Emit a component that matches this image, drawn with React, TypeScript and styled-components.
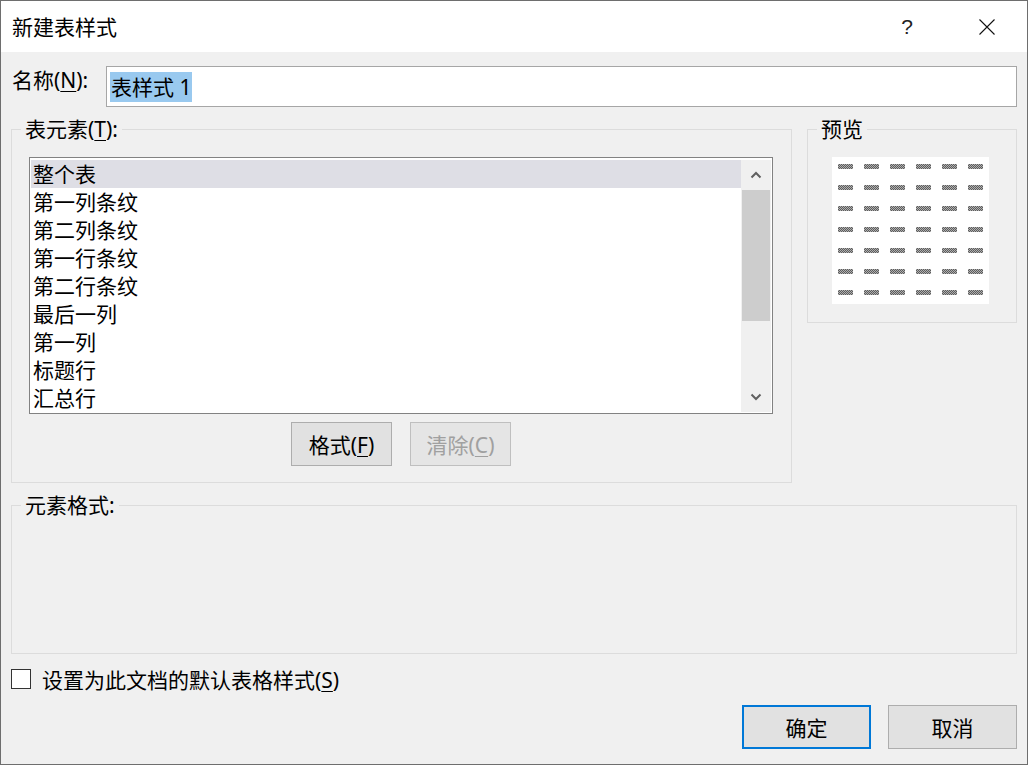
import styled, { createGlobalStyle } from 'styled-components'

const GlobalStyle = createGlobalStyle`
  html, body {
    margin: 0;
    padding: 0;
    background: #f0f0f0;
  }
  body {
    font-family: "Noto Sans", "Noto Sans CJK SC", sans-serif;
    color: #000;
  }
  u {
    text-underline-offset: 3px;
    text-decoration-thickness: 1px;
  }
`

const ELEMENTS = ['整个表', '第一列条纹', '第二列条纹', '第一行条纹', '第二行条纹', '最后一列', '第一列', '标题行', '汇总行']

const Chevron = ({ up }: { up?: boolean }) => (
  <svg width="12" height="8" viewBox="0 0 12 8">
    <path d={up ? 'M1.5 6.5 L6 2 L10.5 6.5' : 'M1.5 1.5 L6 6 L10.5 1.5'} fill="none" stroke="#606060" strokeWidth="2" />
  </svg>
)

const App = () => {
  const dashes = Array.from({ length: 42 })
  return <Window>
    <GlobalStyle />
    <TitleBar>
      <Title>新建表样式</Title>
      <CaptionButton><Help>?</Help></CaptionButton>
      <CaptionButton>
        <svg width="16" height="16" viewBox="0 0 16 16">
          <path d="M0.5 0.5 L15.5 15.5 M15.5 0.5 L0.5 15.5" stroke="#111" strokeWidth="1.1" />
        </svg>
      </CaptionButton>
    </TitleBar>
    <Body>
      <NameRow>
        <NameLabel>名称(<u>N</u>):</NameLabel>
        <NameInput><Selection>表样式 1</Selection></NameInput>
      </NameRow>

      <MainRow>
        <Group $width={781}>
          <Legend>表元素(<u>T</u>):</Legend>
          <ElementsInner>
            <ListBox>
              <Items>
                {ELEMENTS.map((name, i) => <Item key={name} $selected={i === 0}>{name}</Item>)}
              </Items>
              <ScrollBar>
                <ScrollArrow><Chevron up /></ScrollArrow>
                <Thumb />
                <Track />
                <ScrollArrow><Chevron /></ScrollArrow>
              </ScrollBar>
            </ListBox>
            <ButtonRow>
              <Button>格式(<u>F</u>)</Button>
              <Button disabled>清除(<u>C</u>)</Button>
            </ButtonRow>
          </ElementsInner>
        </Group>

        <Group $grow>
          <Legend>预览</Legend>
          <PreviewInner>
            <PreviewSheet>
              {dashes.map((_, i) => <Dash key={i} />)}
            </PreviewSheet>
          </PreviewInner>
        </Group>
      </MainRow>

      <FormatGroup>
        <Legend>元素格式:</Legend>
        <FormatInner />
      </FormatGroup>

      <CheckRow>
        <CheckBox />
        <CheckLabel>设置为此文档的默认表格样式(<u>S</u>)</CheckLabel>
      </CheckRow>

      <FooterRow>
        <DialogButton $default>确定</DialogButton>
        <DialogButton>取消</DialogButton>
      </FooterRow>
    </Body>
  </Window>
}

const Window = styled.div`
  width: 1028px;
  height: 765px;
  box-sizing: border-box;
  border: 1px solid #6e6e6e;
  background: #f0f0f0;
  display: flex;
  flex-direction: column;
  overflow: hidden;
`
const TitleBar = styled.div`
  height: 51px;
  flex-shrink: 0;
  background: #fff;
  display: flex;
  align-items: center;
  padding-left: 11px;
`
const Title = styled.div`
  flex: 1;
  font-size: 21px;
  line-height: 28px;
`
const CaptionButton = styled.div`
  width: 80px;
  height: 51px;
  display: flex;
  align-items: center;
  justify-content: center;
`
const Help = styled.span`
  font-family: "Liberation Sans", sans-serif;
  font-size: 21px;
  color: #222;
`
const Body = styled.div`
  padding: 14px 10px 14px 10px;
  display: flex;
  flex-direction: column;
`
const NameRow = styled.div`
  display: flex;
  align-items: flex-start;
  height: 41px;
`
const NameLabel = styled.div`
  width: 94px;
  padding-left: 1px;
  font-size: 21px;
  line-height: 28px;
`
const NameInput = styled.div`
  flex: 1;
  height: 41px;
  box-sizing: border-box;
  border: 1px solid #a6a6a6;
  background: #fff;
  display: flex;
  align-items: center;
  padding: 0 3px;
`
const Selection = styled.span`
  background: #99c9ef;
  font-size: 21px;
  line-height: 30px;
  padding: 0 1px;
`
const MainRow = styled.div`
  display: flex;
  align-items: flex-start;
  gap: 15px;
  margin-top: 12px;
`
const Group = styled.fieldset<{ $width?: number; $grow?: boolean }>`
  margin: 0;
  padding: 0;
  min-width: 0;
  border: 1px solid #dcdcdc;
  box-sizing: border-box;
  ${p => p.$width ? `width: ${p.$width}px; flex-shrink: 0;` : ''}
  ${p => p.$grow ? 'flex: 1;' : ''}
`
const Legend = styled.legend`
  margin-left: 9px;
  padding: 0 4px;
  font-size: 21px;
  line-height: 21px;
`
const ElementsInner = styled.div`
  padding: 17px 18px 16px 17px;
`
const ListBox = styled.div`
  display: flex;
  width: 744px;
  box-sizing: border-box;
  border: 1px solid #828282;
  padding: 2px 1px 1px 1px;
  background: #fff;
`
const Items = styled.div`
  flex: 1;
  display: flex;
  flex-direction: column;
`
const Item = styled.div<{ $selected?: boolean }>`
  height: 28px;
  line-height: 28px;
  padding-left: 2px;
  font-size: 21px;
  background: ${p => p.$selected ? '#dedee5' : 'transparent'};
`
const ScrollBar = styled.div`
  width: 30px;
  background: #f0f0f0;
  display: flex;
  flex-direction: column;
`
const ScrollArrow = styled.div`
  height: 30px;
  display: flex;
  align-items: center;
  justify-content: center;
`
const Thumb = styled.div`
  height: 131px;
  margin: 0 1px;
  background: #cdcdcd;
`
const Track = styled.div`
  flex: 1;
`
const ButtonRow = styled.div`
  display: flex;
  justify-content: center;
  gap: 18px;
  margin-top: 8px;
`
const Button = styled.button`
  width: 101px;
  height: 44px;
  box-sizing: border-box;
  background: #e1e1e1;
  border: 1px solid #adadad;
  font-family: inherit;
  font-size: 21px;
  color: #000;
  padding: 0;
  &:disabled {
    color: #a0a0a0;
    border-color: #bfbfbf;
    background: #e5e5e5;
  }
`
const PreviewInner = styled.div`
  padding: 17px 0 18px 24px;
`
const PreviewSheet = styled.div`
  display: grid;
  width: max-content;
  grid-template-columns: repeat(6, 15px);
  grid-auto-rows: 5px;
  column-gap: 11px;
  row-gap: 16px;
  padding: 7px 6px 9px 6px;
  background: #fff;
`
const Dash = styled.div`
  background-image: repeating-conic-gradient(#5c5c5c 0 25%, #b0b0b0 0 50%);
  background-size: 2px 2px;
`
const FormatGroup = styled(Group)`
  margin-top: 12px;
`
const FormatInner = styled.div`
  height: 137px;
`
const CheckRow = styled.div`
  display: flex;
  align-items: center;
  gap: 11px;
  height: 20px;
  margin-top: 15px;
`
const CheckBox = styled.div`
  width: 20px;
  height: 20px;
  box-sizing: border-box;
  border: 1px solid #333;
  background: #fff;
`
const CheckLabel = styled.div`
  font-size: 21px;
  line-height: 24px;
  margin-top: 1px;
`
const FooterRow = styled.div`
  display: flex;
  justify-content: flex-end;
  gap: 17px;
  margin-top: 16px;
`
const DialogButton = styled.button<{ $default?: boolean }>`
  width: 129px;
  height: 44px;
  box-sizing: border-box;
  background: #e1e1e1;
  border: ${p => p.$default ? '2px solid #0078d7' : '1px solid #adadad'};
  font-family: inherit;
  font-size: 21px;
  color: #000;
  padding: 0;
`

export default App
